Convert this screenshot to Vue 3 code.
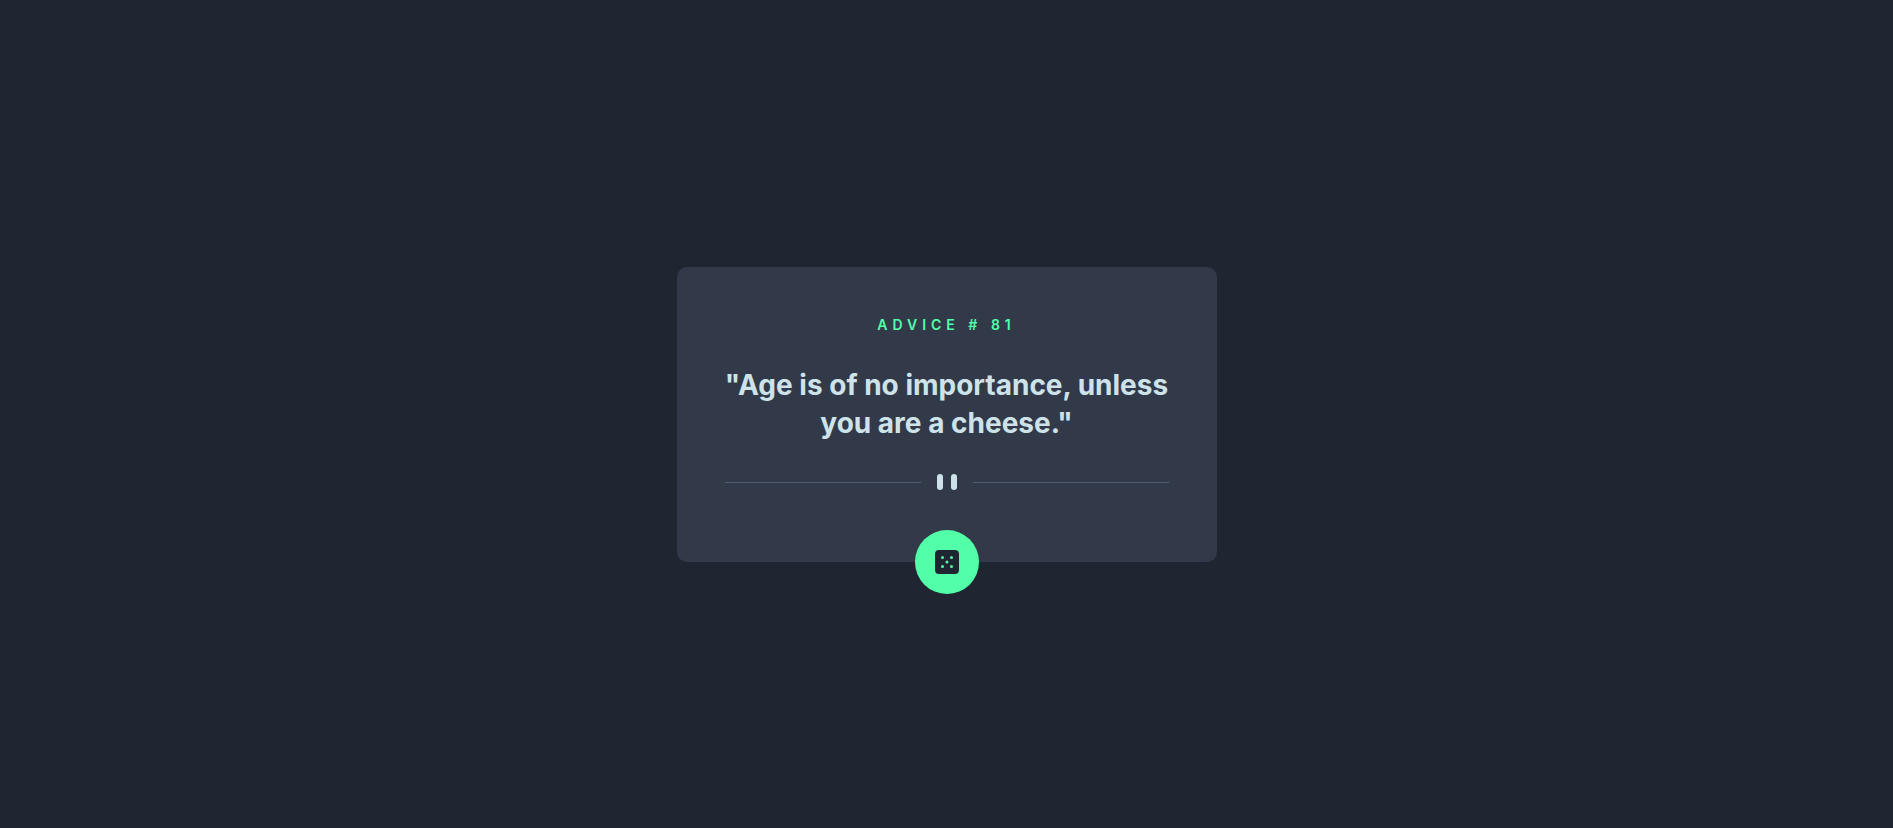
<script setup>
import { ref } from 'vue'

const advice = ref({ id: 81, text: 'Age is of no importance, unless you are a cheese.' })
</script>

<template>
  <main class="page">
    <article class="card">
      <h1 class="label">ADVICE # {{ advice.id }}</h1>
      <p class="quote">"{{ advice.text }}"</p>
      <div class="divider" aria-hidden="true">
        <span class="line"></span>
        <svg class="bars" width="20" height="16" viewBox="0 0 20 16">
          <rect width="6" height="16" rx="3" />
          <rect x="14" width="6" height="16" rx="3" />
        </svg>
        <span class="line"></span>
      </div>
      <button class="dice" type="button" aria-label="New advice">
        <svg width="24" height="24" viewBox="0 0 24 24">
          <path
            d="M20 0H4a4.005 4.005 0 0 0-4 4v16a4.005 4.005 0 0 0 4 4h16a4.005 4.005 0 0 0 4-4V4a4.005 4.005 0 0 0-4-4ZM7.500 18a1.500 1.500 0 1 1 0-3 1.500 1.500 0 0 1 0 3Zm0-9a1.500 1.500 0 1 1 0-3 1.500 1.500 0 0 1 0 3Zm4.500 4.500a1.500 1.500 0 1 1 0-3 1.500 1.500 0 0 1 0 3Zm4.500 4.500a1.500 1.500 0 1 1 0-3 1.500 1.500 0 0 1 0 3Zm0-9a1.500 1.500 0 1 1 0-3 1.500 1.500 0 0 1 0 3Z"
          />
        </svg>
      </button>
    </article>
  </main>
</template>

<style>
body {
  margin: 0;
  background: #1f2632;
}
</style>

<style scoped>
.page {
  display: flex;
  align-items: center;
  justify-content: center;
  min-height: 100vh;
  box-sizing: border-box;
  font-family: Inter, "Liberation Sans", sans-serif;
}

.card {
  position: relative;
  display: flex;
  flex-direction: column;
  gap: 32px;
  box-sizing: border-box;
  width: 100%;
  max-width: 540px;
  padding: 48px 48px 72px;
  border-radius: 10px;
  background: #323a49;
  text-align: center;
}

.label {
  margin: 0;
  color: #52ffa8;
  font-size: 14px;
  font-weight: 600;
  line-height: 19px;
  letter-spacing: 5px;
}

.quote {
  margin: 0;
  color: #cee3e9;
  font-size: 28px;
  font-weight: 700;
  line-height: 38px;
}

.divider {
  display: flex;
  align-items: center;
  gap: 16px;
}

.line {
  flex: 1;
  height: 1px;
  margin-top: 1px;
  background: #4f5d74;
}

.bars {
  display: block;
  fill: #cee3e9;
}

.dice {
  position: absolute;
  bottom: -32px;
  left: 50%;
  display: flex;
  align-items: center;
  justify-content: center;
  width: 64px;
  height: 64px;
  margin-left: -32px;
  padding: 0;
  border: 0;
  border-radius: 50%;
  background: #52ffa8;
  cursor: pointer;
}

.dice svg {
  fill: #1f2632;
}
</style>
